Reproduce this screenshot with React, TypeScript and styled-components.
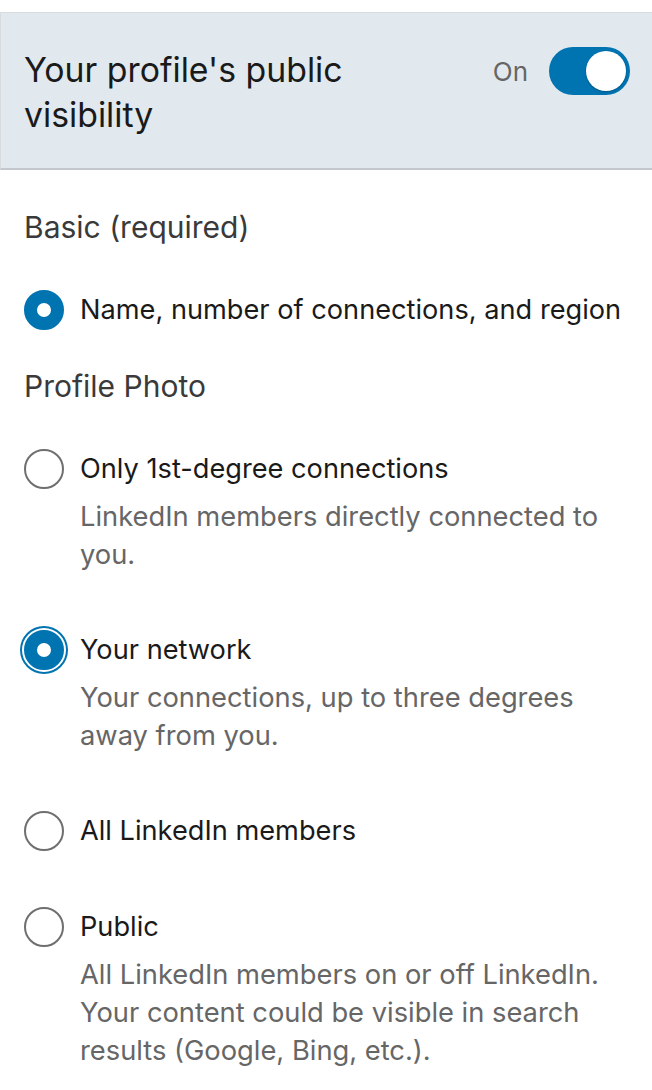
import styled, { createGlobalStyle } from 'styled-components';

const GlobalStyle = createGlobalStyle`
  html, body {
    margin: 0;
    padding: 0;
    background: #ffffff;
  }
  body {
    font-family: Inter, "Noto Sans", "Liberation Sans", sans-serif;
    -webkit-font-smoothing: antialiased;
  }
`;

type Option = {
  id: string;
  label: string;
  desc?: string;
};

const photoOptions: Option[] = [
  {
    id: 'first',
    label: 'Only 1st-degree connections',
    desc: 'LinkedIn members directly connected to you.',
  },
  {
    id: 'network',
    label: 'Your network',
    desc: 'Your connections, up to three degrees away from you.',
  },
  { id: 'all', label: 'All LinkedIn members' },
  {
    id: 'public',
    label: 'Public',
    desc: 'All LinkedIn members on or off LinkedIn. Your content could be visible in search results (Google, Bing, etc.).',
  },
];

export default function App() {
  const selected = 'network';

  return (
    <>
      <GlobalStyle />
      <Page>
        <Header>
          <Title>Your profile's public visibility</Title>
          <ToggleWrap>
            <ToggleLabel>On</ToggleLabel>
            <Track>
              <Knob />
            </Track>
          </ToggleWrap>
        </Header>
        <Body>
          <SectionTitle $bottom={44}>Basic (required)</SectionTitle>
          <Row>
            <Radio $checked />
            <Label>Name, number of connections, and region</Label>
          </Row>
          <SectionTitle $top={36} $bottom={44}>
            Profile Photo
          </SectionTitle>
          <List>
            {photoOptions.map((o) => (
              <Row key={o.id}>
                <Radio $checked={o.id === selected} $focused={o.id === selected} />
                <Text>
                  <Label>{o.label}</Label>
                  {o.desc && <Desc>{o.desc}</Desc>}
                </Text>
              </Row>
            ))}
          </List>
        </Body>
      </Page>
    </>
  );
}

const Page = styled.div`
  width: 652px;
  padding-top: 12px;
`;

const Header = styled.div`
  display: flex;
  justify-content: space-between;
  align-items: flex-start;
  background: #e1e9ee;
  border-top: 1px solid #d9dcdf;
  border-left: 1px solid #d9dcdf;
  border-bottom: 2px solid #c4c8cc;
  padding: 34px 22px 31px 23px;
`;

const Title = styled.h1`
  margin: 0;
  width: 380px;
  font-size: 33.8px;
  line-height: 45px;
  font-weight: 400;
  color: #1a1a1a;
`;

const ToggleWrap = styled.div`
  display: flex;
  align-items: center;
  gap: 21px;
`;

const ToggleLabel = styled.span`
  font-size: 26px;
  color: #666666;
`;

const Track = styled.div`
  position: relative;
  width: 81px;
  height: 48px;
  border-radius: 24px;
  background: #0073b1;
`;

const Knob = styled.div`
  position: absolute;
  right: 4px;
  top: 4px;
  width: 40px;
  height: 40px;
  border-radius: 50%;
  background: #ffffff;
  box-shadow: 0 1px 2px rgba(0, 0, 0, 0.25);
`;

const Body = styled.div`
  padding: 37px 24px 0 24px;
`;

const SectionTitle = styled.h2<{ $top?: number; $bottom?: number }>`
  margin: ${(p) => p.$top ?? 0}px 0 ${(p) => p.$bottom ?? 0}px 0;
  font-size: 30px;
  line-height: 40px;
  font-weight: 400;
  color: #3a3a3a;
`;

const List = styled.div`
  display: flex;
  flex-direction: column;
  gap: 57px;
`;

const Row = styled.div`
  display: flex;
  align-items: flex-start;
  gap: 16px;
`;

const Radio = styled.span<{ $checked?: boolean; $focused?: boolean }>`
  flex: none;
  box-sizing: border-box;
  width: 40px;
  height: 40px;
  margin-top: -1px;
  border-radius: 50%;
  border: ${(p) => (p.$checked ? '13px solid #0073b1' : '2px solid #6f6f6f')};
  background: #ffffff;
  box-shadow: ${(p) => (p.$focused ? '0 0 0 2px #ffffff, 0 0 0 4px #0073b1' : 'none')};
`;

const Text = styled.div`
  display: flex;
  flex-direction: column;
  gap: 10px;
`;

const Label = styled.span`
  font-size: 27.2px;
  line-height: 38px;
  color: #1a1a1a;
`;

const Desc = styled.span`
  font-size: 27.3px;
  line-height: 38px;
  color: #666666;
`;
